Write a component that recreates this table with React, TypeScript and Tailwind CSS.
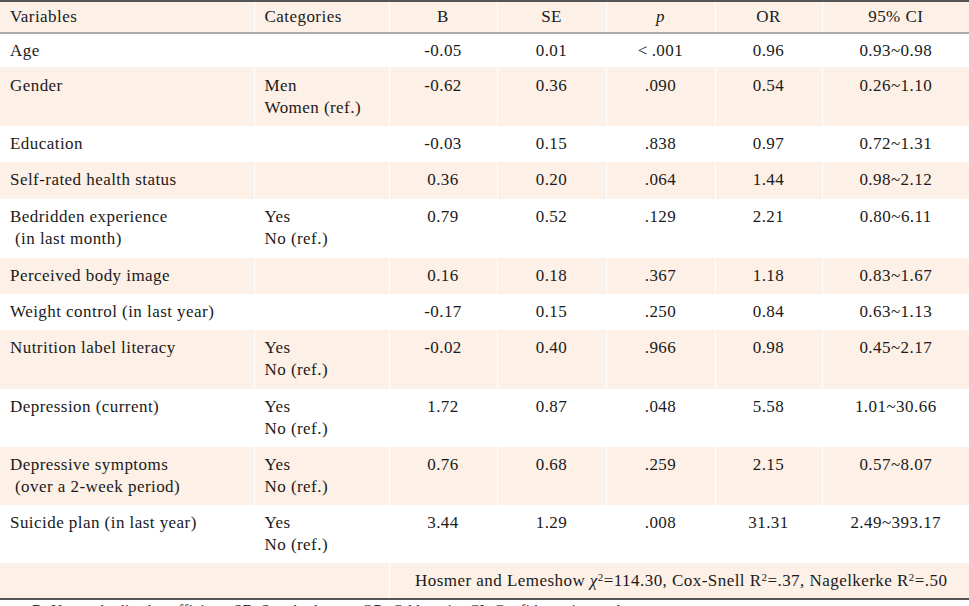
import React from "react";

type Row = {
  v: React.ReactNode;
  c?: string[];
  b: string;
  se: string;
  p: string;
  or: string;
  ci: string;
  h: number;
  pt: number;
};

const rows: Row[] = [
  { v: "Age", b: "-0.05", se: "0.01", p: "<\u2009.001", or: "0.96", ci: "0.93~0.98", h: 34, pt: 6 },
  { v: "Gender", c: ["Men", "Women (ref.)"], b: "-0.62", se: "0.36", p: ".090", or: "0.54", ci: "0.26~1.10", h: 59, pt: 8 },
  { v: "Education", b: "-0.03", se: "0.15", p: ".838", or: "0.97", ci: "0.72~1.31", h: 36, pt: 7 },
  { v: "Self-rated health status", b: "0.36", se: "0.20", p: ".064", or: "1.44", ci: "0.98~2.12", h: 37, pt: 7 },
  {
    v: (
      <>
        <div>Bedridden experience</div>
        <div className="pl-[5px]">(in last month)</div>
      </>
    ),
    c: ["Yes", "No (ref.)"],
    b: "0.79",
    se: "0.52",
    p: ".129",
    or: "2.21",
    ci: "0.80~6.11",
    h: 59,
    pt: 7,
  },
  { v: "Perceived body image", b: "0.16", se: "0.18", p: ".367", or: "1.18", ci: "0.83~1.67", h: 36, pt: 7 },
  { v: "Weight control (in last year)", b: "-0.17", se: "0.15", p: ".250", or: "0.84", ci: "0.63~1.13", h: 36, pt: 7 },
  { v: "Nutrition label literacy", c: ["Yes", "No (ref.)"], b: "-0.02", se: "0.40", p: ".966", or: "0.98", ci: "0.45~2.17", h: 59, pt: 7 },
  { v: "Depression (current)", c: ["Yes", "No (ref.)"], b: "1.72", se: "0.87", p: ".048", or: "5.58", ci: "1.01~30.66", h: 58, pt: 7 },
  {
    v: (
      <>
        <div>Depressive symptoms</div>
        <div className="pl-[5px]">(over a 2-week period)</div>
      </>
    ),
    c: ["Yes", "No (ref.)"],
    b: "0.76",
    se: "0.68",
    p: ".259",
    or: "2.15",
    ci: "0.57~8.07",
    h: 58,
    pt: 7,
  },
  { v: "Suicide plan (in last year)", c: ["Yes", "No (ref.)"], b: "3.44", se: "1.29", p: ".008", or: "31.31", ci: "2.49~393.17", h: 58, pt: 7 },
];

export default function App() {
  return (
    <div className="w-[969px] h-[606px] overflow-hidden bg-white text-[#1a1a1a] text-[17px] leading-[22px] tracking-[0.45px] font-['Liberation_Serif','Times_New_Roman',serif]">
      <table className="w-[969px] table-fixed border-collapse border-t-2 border-t-[#555] border-b-2 border-b-[#555]">
        <colgroup>
          <col className="w-[254px]" />
          <col className="w-[135px]" />
          <col className="w-[108px]" />
          <col className="w-[109px]" />
          <col className="w-[109px]" />
          <col className="w-[107px]" />
          <col className="w-[147px]" />
        </colgroup>
        <thead>
          <tr className="h-[32px] bg-[#fdf0e6] border-b-2 border-b-[#aaa]">
            <th className="font-normal text-left pl-[10px] pt-[4px] align-top border-r border-r-white">Variables</th>
            <th className="font-normal text-left pl-[10px] pt-[4px] align-top border-r border-r-white">Categories</th>
            <th className="font-normal text-center pt-[4px] align-top border-r border-r-white">B</th>
            <th className="font-normal text-center pt-[4px] align-top border-r border-r-white">SE</th>
            <th className="font-normal text-center pt-[4px] align-top border-r border-r-white italic">p</th>
            <th className="font-normal text-center pt-[4px] align-top border-r border-r-white">OR</th>
            <th className="font-normal text-center pt-[4px] align-top">95% CI</th>
          </tr>
        </thead>
        <tbody>
          {rows.map((r, i) => (
            <tr
              key={i}
              className={i % 2 === 1 ? "bg-[#fdf0e6]" : "bg-white"}
              style={{ height: r.h }}
            >
              <td className="align-top pl-[10px] border-r border-r-white" style={{ paddingTop: r.pt }}>
                {r.v}
              </td>
              <td className="align-top pl-[10px] border-r border-r-white" style={{ paddingTop: r.pt }}>
                {r.c ? r.c.map((x) => <div key={x}>{x}</div>) : null}
              </td>
              <td className="align-top text-center border-r border-r-white" style={{ paddingTop: r.pt }}>
                {r.b}
              </td>
              <td className="align-top text-center border-r border-r-white" style={{ paddingTop: r.pt }}>
                {r.se}
              </td>
              <td className="align-top text-center border-r border-r-white" style={{ paddingTop: r.pt }}>
                {r.p}
              </td>
              <td className="align-top text-center border-r border-r-white" style={{ paddingTop: r.pt }}>
                {r.or}
              </td>
              <td className="align-top text-center" style={{ paddingTop: r.pt }}>
                {r.ci}
              </td>
            </tr>
          ))}
          <tr className="h-[36px] bg-[#fdf0e6]">
            <td colSpan={2} className="border-r border-r-white" />
            <td colSpan={5} className="align-top text-center pt-[7px] pl-[4px]">
              Hosmer and Lemeshow <i>χ</i>
              <sup className="text-[11px]">2</sup>=114.30, Cox-Snell R<sup className="text-[11px]">2</sup>=.37, Nagelkerke R
              <sup className="text-[11px]">2</sup>=.50
            </td>
          </tr>
        </tbody>
      </table>
      <div className="pl-[32px] leading-[16px] text-[15px] mt-[2px]">
        B=Unstandardized coefficient; SE=Standard error; OR=Odds ratio; CI=Confidence interval.
      </div>
    </div>
  );
}
